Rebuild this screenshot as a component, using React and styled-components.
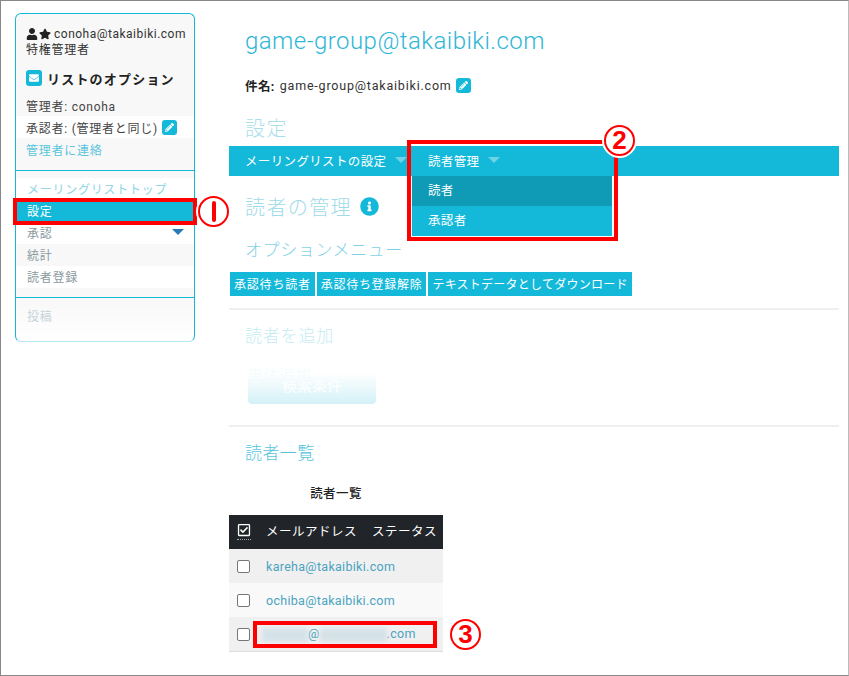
import styled, { createGlobalStyle } from "styled-components";
import { FaUser, FaStar, FaEnvelope, FaPencilAlt, FaInfoCircle, FaRegCheckSquare } from "react-icons/fa";

const cyan = "#14b8d9";

const GlobalStyle = createGlobalStyle`
  html, body { margin: 0; padding: 0; background: #fff; }
  body {
    font-family: Roboto, "Noto Sans CJK JP", sans-serif;
    font-size: 12px;
    color: #333;
  }
`;

const Frame = styled.div`
  position: relative;
  box-sizing: border-box;
  width: 849px;
  height: 676px;
  border: 1px solid #888;
  border-right-color: #bbb;
  overflow: hidden;
  display: flex;
  align-items: flex-start;
  padding: 12px 0 0 14px;
`;

const Sidebar = styled.aside`
  box-sizing: border-box;
  flex: none;
  width: 180px;
  height: 329px;
  border: 1px solid ${cyan};
  border-bottom-color: #b5e8f2;
  border-radius: 6px;
  background: linear-gradient(to bottom, #f8f8f8 0, #f8f8f8 285px, #fff 100%);
  overflow: hidden;
  letter-spacing: 0.75px;
`;

const SideHead = styled.div`
  padding: 12px 0 0;
  height: 157px;
  box-sizing: border-box;
  border-bottom: 1px solid ${cyan};
`;

const UserLine = styled.div`
  display: flex;
  align-items: center;
  gap: 1px;
  padding-left: 10px;
  height: 16px;
  letter-spacing: 0.5px;
  white-space: nowrap;
  svg { font-size: 12px; color: #222; }
  span { margin-left: 2px; }
`;

const Role = styled.div`
  padding-left: 10px;
  height: 16px;
  line-height: 16px;
`;

const OptionTitle = styled.div`
  display: flex;
  align-items: center;
  gap: 5px;
  margin-top: 11px;
  padding-left: 10px;
  height: 18px;
  font-size: 13px;
  font-weight: 700;
  letter-spacing: 1.2px;
  color: #222;
`;

const IconSquare = styled.span`
  display: inline-flex;
  align-items: center;
  justify-content: center;
  width: ${(props) => props.$size}px;
  height: ${(props) => props.$size}px;
  border-radius: 3px;
  background: ${cyan};
  color: #fff;
  font-size: ${(props) => props.$size - 6}px;
  flex: none;
`;

const InfoRow = styled.div`
  display: flex;
  align-items: center;
  gap: 4px;
  height: 22px;
  padding-left: 10px;
  margin-top: ${(props) => props.$top || 0}px;
  background: ${(props) => (props.$white ? "#fff" : "transparent")};
  color: ${(props) => (props.$link ? "#5cc5dc" : "#444")};
`;

const SideNav = styled.ul`
  list-style: none;
  margin: 0;
  padding: 7px 0 9px;
  border-bottom: 1px solid ${cyan};
`;

const SideItem = styled.li`
  display: flex;
  justify-content: space-between;
  align-items: center;
  box-sizing: border-box;
  height: 22px;
  padding: 0 10px 2px 11px;
  background: ${(props) => (props.$active ? cyan : props.$gray ? "#f8f8f8" : "#fff")};
  color: ${(props) => (props.$active ? "#fff" : props.$color || "#8a9aa0")};
`;

const DownTri = styled.i`
  width: 0;
  height: 0;
  border-left: 6px solid transparent;
  border-right: 6px solid transparent;
  border-top: 6px solid ${(props) => props.$color};
  margin-left: ${(props) => props.$gap || 0}px;
`;

const FadedPost = styled.div`
  padding: 9px 11px;
  color: #c5d4d9;
`;

const Main = styled.main`
  flex: none;
  width: 610px;
  margin-left: 34px;
  margin-top: 8px;
`;

const Title = styled.h1`
  margin: 0;
  height: 40px;
  line-height: 40px;
  padding-left: 16px;
  font-size: 24px;
  font-weight: 300;
  letter-spacing: 0.45px;
  color: #2fb6d6;
`;

const Subject = styled.div`
  display: flex;
  align-items: center;
  gap: 4px;
  height: 20px;
  margin-top: 14px;
  padding-left: 16px;
  font-size: 12.5px;
  letter-spacing: 0.8px;
  b { font-weight: 700; color: #222; margin-right: 1px; letter-spacing: 0.4px; }
`;

const SectionHead = styled.h2`
  display: flex;
  align-items: center;
  gap: 8px;
  margin: ${(props) => props.$top}px 0 0;
  padding: 0 0 2px 16px;
  box-sizing: border-box;
  height: 28px;
  font-size: 20px;
  font-weight: 300;
  letter-spacing: 1.4px;
  color: ${(props) => props.$color || "#9fdbe9"};
  svg { color: ${cyan}; font-size: 19px; }
`;

const SubHead = styled.h3`
  margin: ${(props) => props.$top}px 0 0;
  padding-left: 16px;
  height: 24px;
  line-height: 24px;
  font-size: 17px;
  font-weight: 300;
  letter-spacing: ${(props) => props.$spacing || 0.4}px;
  color: ${(props) => props.$color};
`;

const NavBar = styled.nav`
  display: flex;
  height: 30px;
  margin-top: 4px;
  background: ${cyan};
  color: #fff;
  font-size: 12.5px;
  letter-spacing: 0.35px;
`;

const NavItem = styled.div`
  position: relative;
  display: flex;
  align-items: center;
  width: ${(props) => props.$width}px;
  padding: 0 0 2px 16px;
  box-sizing: border-box;
`;

const Dropdown = styled.div`
  position: absolute;
  top: 30px;
  left: 0;
  width: 200px;
  z-index: 2;
`;

const DropItem = styled.div`
  height: 30px;
  line-height: 30px;
  padding-left: 16px;
  background: ${(props) => (props.$active ? "#0f9ab5" : cyan)};
`;

const ButtonRow = styled.div`
  display: flex;
  gap: 2px;
  margin: 10px 0 0 1px;
`;

const MenuButton = styled.button`
  height: 24px;
  padding: 0 4px 1px;
  border: 0;
  background: ${cyan};
  color: #fff;
  font: inherit;
  font-size: 12px;
  letter-spacing: ${(props) => props.$spacing}px;
  white-space: nowrap;
`;

const Rule = styled.hr`
  margin: ${(props) => props.$top}px 0 0;
  border: 0;
  border-top: 2px solid #efefef;
`;

const FadedButton = styled.div`
  position: relative;
  width: 128px;
  height: 34px;
  margin: 22px 0 0 19px;
  border-radius: 4px;
  background: linear-gradient(to bottom, #fff 10%, #d3f1f7 100%);
  color: #fff;
  font-size: 15px;
  text-align: center;
  line-height: 32px;
`;

const FadedLabel = styled.span`
  position: absolute;
  left: -1px;
  top: -4px;
  font-size: 16px;
  font-weight: 300;
  line-height: 20px;
  color: #f2fbfd;
`;

const TableBlock = styled.div`
  width: 214px;
  margin-top: 19px;
`;

const Caption = styled.div`
  height: 20px;
  line-height: 20px;
  margin-bottom: 11px;
  text-align: center;
  font-size: 12.5px;
  font-weight: 500;
  letter-spacing: 0.4px;
  color: #222;
`;

const Table = styled.table`
  width: 100%;
  table-layout: fixed;
  border-collapse: collapse;
  border-bottom: 1px solid #ddd;
  thead { background: #212529; color: #fff; }
  th {
    height: 34px;
    padding: 0 0 3px;
    box-sizing: border-box;
    text-align: left;
    font-size: 12.5px;
    font-weight: 400;
    letter-spacing: 0.5px;
    white-space: nowrap;
  }
  th:first-child { width: 37px; }
  th:nth-child(2) { width: 106px; }
  td { height: 34px; padding: 0; color: #4aa3bf; font-size: 12.5px; letter-spacing: 0.3px; white-space: nowrap; }
  tbody tr:nth-child(odd) { background: #f0f0f0; }
  tbody tr:nth-child(even) { background: #f9f9f9; }
`;

const CheckCell = styled.span`
  display: flex;
  align-items: center;
  width: 37px;
  padding-left: 8px;
  box-sizing: border-box;
`;

const Box = styled.i`
  display: block;
  box-sizing: border-box;
  width: 13px;
  height: 13px;
  border: 1px solid #767676;
  border-radius: 2px;
  background: #fff;
`;

const HeadCheck = styled.span`
  display: inline-flex;
  border-bottom: 1px dotted #aaa;
  padding-bottom: 2px;
  font-size: 14px;
  margin-top: 2px;
`;

const Blurred = styled.span`
  display: inline-block;
  width: ${(props) => props.$width}px;
  height: 14px;
  margin-left: ${(props) => props.$shift || 0}px;
  vertical-align: middle;
  background: #d5e2e8;
  filter: blur(2px);
`;

const RedBox = styled.div`
  position: absolute;
  left: ${(props) => props.$x}px;
  top: ${(props) => props.$y}px;
  width: ${(props) => props.$w}px;
  height: ${(props) => props.$h}px;
  box-sizing: border-box;
  border: 4px solid #f00;
  z-index: 3;
`;

const Marker = styled.div`
  position: absolute;
  left: ${(props) => props.$x}px;
  top: ${(props) => props.$y}px;
  box-sizing: border-box;
  width: 31px;
  height: 31px;
  display: flex;
  align-items: center;
  justify-content: center;
  border: 2px solid #f00;
  border-radius: 50%;
  background: #fff;
  box-shadow: 0 0 0 2px #fff;
  color: #f00;
  font-family: "Liberation Sans", sans-serif;
  font-size: 26px;
  font-weight: 700;
  z-index: 4;
`;

const MarkerBar = styled.i`
  display: block;
  width: 4px;
  height: 21px;
  border-radius: 2px;
  background: #f00;
`;

export default function App() {
  return (
    <>
      <GlobalStyle />
      <Frame>
        <Sidebar>
          <SideHead>
            <UserLine>
              <FaUser />
              <FaStar />
              <span>conoha@takaibiki.com</span>
            </UserLine>
            <Role>特権管理者</Role>
            <OptionTitle>
              <IconSquare $size={16}>
                <FaEnvelope />
              </IconSquare>
              リストのオプション
            </OptionTitle>
            <InfoRow $top={7}>管理者: conoha</InfoRow>
            <InfoRow $white>
              承認者: (管理者と同じ)
              <IconSquare $size={15}>
                <FaPencilAlt />
              </IconSquare>
            </InfoRow>
            <InfoRow $link>管理者に連絡</InfoRow>
          </SideHead>
          <SideNav>
            <SideItem $color="#8fd6e6">メーリングリストトップ</SideItem>
            <SideItem $active>設定</SideItem>
            <SideItem>
              承認
              <DownTri $color="#2a7ab5" />
            </SideItem>
            <SideItem $gray>統計</SideItem>
            <SideItem>読者登録</SideItem>
          </SideNav>
          <FadedPost>投稿</FadedPost>
        </Sidebar>

        <Main>
          <Title>game-group@takaibiki.com</Title>
          <Subject>
            <b>件名:</b> game-group@takaibiki.com
            <IconSquare $size={15}>
              <FaPencilAlt />
            </IconSquare>
          </Subject>
          <SectionHead $top={19} $color="#a8dfeb">設定</SectionHead>
          <NavBar>
            <NavItem $width={183}>
              メーリングリストの設定
              <DownTri $color="#6fd3e8" $gap={9} />
            </NavItem>
            <NavItem $width={200}>
              読者管理
              <DownTri $color="#6fd3e8" $gap={9} />
              <Dropdown>
                <DropItem $active>読者</DropItem>
                <DropItem>承認者</DropItem>
              </Dropdown>
            </NavItem>
          </NavBar>
          <SectionHead $top={17}>
            読者の管理
            <FaInfoCircle />
          </SectionHead>
          <SubHead $top={17} $color="#7fd2e4" $spacing={0.6}>オプションメニュー</SubHead>
          <ButtonRow>
            <MenuButton $spacing={0.8}>承認待ち読者</MenuButton>
            <MenuButton $spacing={0.7}>承認待ち登録解除</MenuButton>
            <MenuButton $spacing={0.25}>テキストデータとしてダウンロード</MenuButton>
          </ButtonRow>
          <Rule $top={12} />
          <SubHead $top={14} $color="#c5ecf4" $spacing={0.8}>読者を追加</SubHead>
          <FadedButton>
            <FadedLabel>単体追加</FadedLabel>
            検索条件
          </FadedButton>
          <Rule $top={21} />
          <SubHead $top={14} $color="#55c4dc">読者一覧</SubHead>
          <TableBlock>
            <Caption>読者一覧</Caption>
            <Table>
              <thead>
                <tr>
                  <th>
                    <CheckCell>
                      <HeadCheck>
                        <FaRegCheckSquare />
                      </HeadCheck>
                    </CheckCell>
                  </th>
                  <th>メールアドレス</th>
                  <th>ステータス</th>
                </tr>
              </thead>
              <tbody>
                <tr>
                  <td><CheckCell><Box /></CheckCell></td>
                  <td colSpan={2}>kareha@takaibiki.com</td>
                </tr>
                <tr>
                  <td><CheckCell><Box /></CheckCell></td>
                  <td colSpan={2}>ochiba@takaibiki.com</td>
                </tr>
                <tr>
                  <td><CheckCell><Box /></CheckCell></td>
                  <td colSpan={2}>
                    <Blurred $width={46} $shift={-4} />@<Blurred $width={67} />.com
                  </td>
                </tr>
              </tbody>
            </Table>
          </TableBlock>
        </Main>

        <RedBox $x={12} $y={197} $w={184} $h={27} />
        <Marker $x={197} $y={195}>
          <MarkerBar />
        </Marker>
        <RedBox $x={406} $y={139} $w={211} $h={101} />
        <Marker $x={603} $y={124}>2</Marker>
        <RedBox $x={252} $y={620} $w={184} $h={27} />
        <Marker $x={449} $y={618}>3</Marker>
      </Frame>
    </>
  );
}
